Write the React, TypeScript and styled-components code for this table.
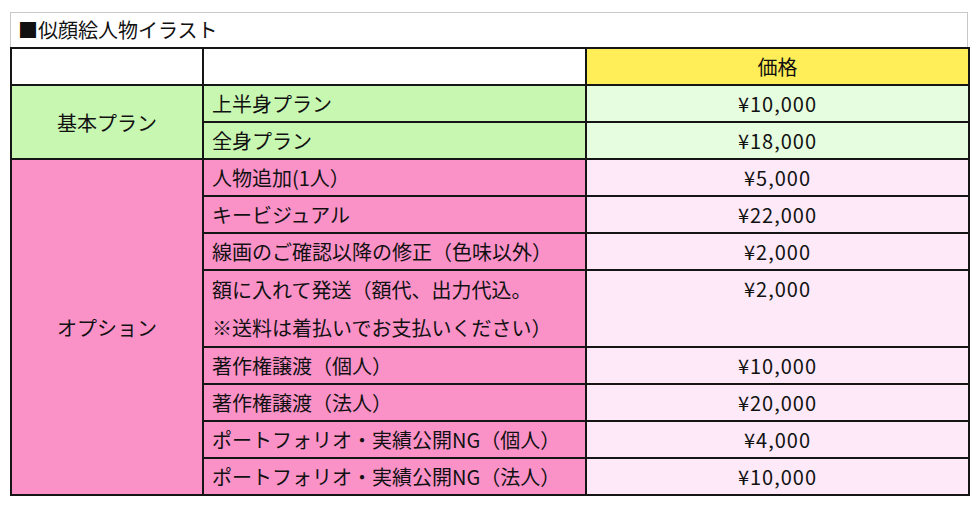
import React from "react";
import styled, { createGlobalStyle } from "styled-components";

const Global = createGlobalStyle`
  html, body { margin: 0; padding: 0; background: #fff; }
  body { font-family: "Noto Sans CJK JP", "Noto Sans", sans-serif; color: #111; }
`;

const Wrapper = styled.div`
  width: 958px;
  margin: 12px 0 0 10px;
`;

const Title = styled.div`
  height: 35px;
  box-sizing: border-box;
  border: 1px solid #c9c9c9;
  border-bottom: none;
  padding-left: 7px;
  display: flex;
  align-items: center;
  font-size: 20px;
  line-height: 1;
`;

const Table = styled.table`
  width: 958px;
  border-collapse: collapse;
  table-layout: fixed;
  font-size: 20px;
`;

type Tone = "white" | "yellow" | "green" | "lightGreen" | "pink" | "lightPink";

const tones: Record<Tone, string> = {
  white: "#ffffff",
  yellow: "#ffee58",
  green: "#c8f7b2",
  lightGreen: "#e7fde0",
  pink: "#fa92c8",
  lightPink: "#fde9f8",
};

const Cell = styled.td<{ $tone: Tone; $align?: "left" | "center"; $top?: boolean }>`
  border: 2px solid #151515;
  background: ${(p) => tones[p.$tone]};
  text-align: ${(p) => p.$align ?? "center"};
  vertical-align: ${(p) => (p.$top ? "top" : "middle")};
  padding: 0 0 0 ${(p) => (p.$align === "left" ? "8px" : "0")};
  height: 35px;
  line-height: 35px;
  white-space: nowrap;
`;

const Line = styled.div<{ $tall?: boolean }>`
  line-height: ${(p) => (p.$tall ? "37.5px" : "35px")};
`;

const Price = styled.div`
  line-height: 35px;
  letter-spacing: 1px;
`;

const basic = [
  { name: "上半身プラン", price: "¥10,000" },
  { name: "全身プラン", price: "¥18,000" },
];

const options: { name: string[]; price: string }[] = [
  { name: ["人物追加(1人）"], price: "¥5,000" },
  { name: ["キービジュアル"], price: "¥22,000" },
  { name: ["線画のご確認以降の修正（色味以外）"], price: "¥2,000" },
  { name: ["額に入れて発送（額代、出力代込。", "※送料は着払いでお支払いください）"], price: "¥2,000" },
  { name: ["著作権譲渡（個人）"], price: "¥10,000" },
  { name: ["著作権譲渡（法人）"], price: "¥20,000" },
  { name: ["ポートフォリオ・実績公開NG（個人）"], price: "¥4,000" },
  { name: ["ポートフォリオ・実績公開NG（法人）"], price: "¥10,000" },
];

export default function App() {
  return (
    <>
      <Global />
      <Wrapper>
        <Title>■似顔絵人物イラスト</Title>
        <Table>
          <colgroup>
            <col style={{ width: 192 }} />
            <col style={{ width: 383 }} />
            <col style={{ width: 383 }} />
          </colgroup>
          <tbody>
            <tr>
              <Cell $tone="white" />
              <Cell $tone="white" />
              <Cell $tone="yellow">価格</Cell>
            </tr>
            {basic.map((r, i) => (
              <tr key={r.name}>
                {i === 0 && (
                  <Cell $tone="green" rowSpan={basic.length}>
                    基本プラン
                  </Cell>
                )}
                <Cell $tone="green" $align="left">
                  {r.name}
                </Cell>
                <Cell $tone="lightGreen">
                  <Price>{r.price}</Price>
                </Cell>
              </tr>
            ))}
            {options.map((r, i) => (
              <tr key={r.name.join("")}>
                {i === 0 && (
                  <Cell $tone="pink" rowSpan={options.length}>
                    オプション
                  </Cell>
                )}
                <Cell $tone="pink" $align="left">
                  {r.name.map((l) => (
                    <Line key={l} $tall={r.name.length > 1}>
                      {l}
                    </Line>
                  ))}
                </Cell>
                <Cell $tone="lightPink" $top={r.name.length > 1}>
                  <Price>{r.price}</Price>
                </Cell>
              </tr>
            ))}
          </tbody>
        </Table>
      </Wrapper>
    </>
  );
}
